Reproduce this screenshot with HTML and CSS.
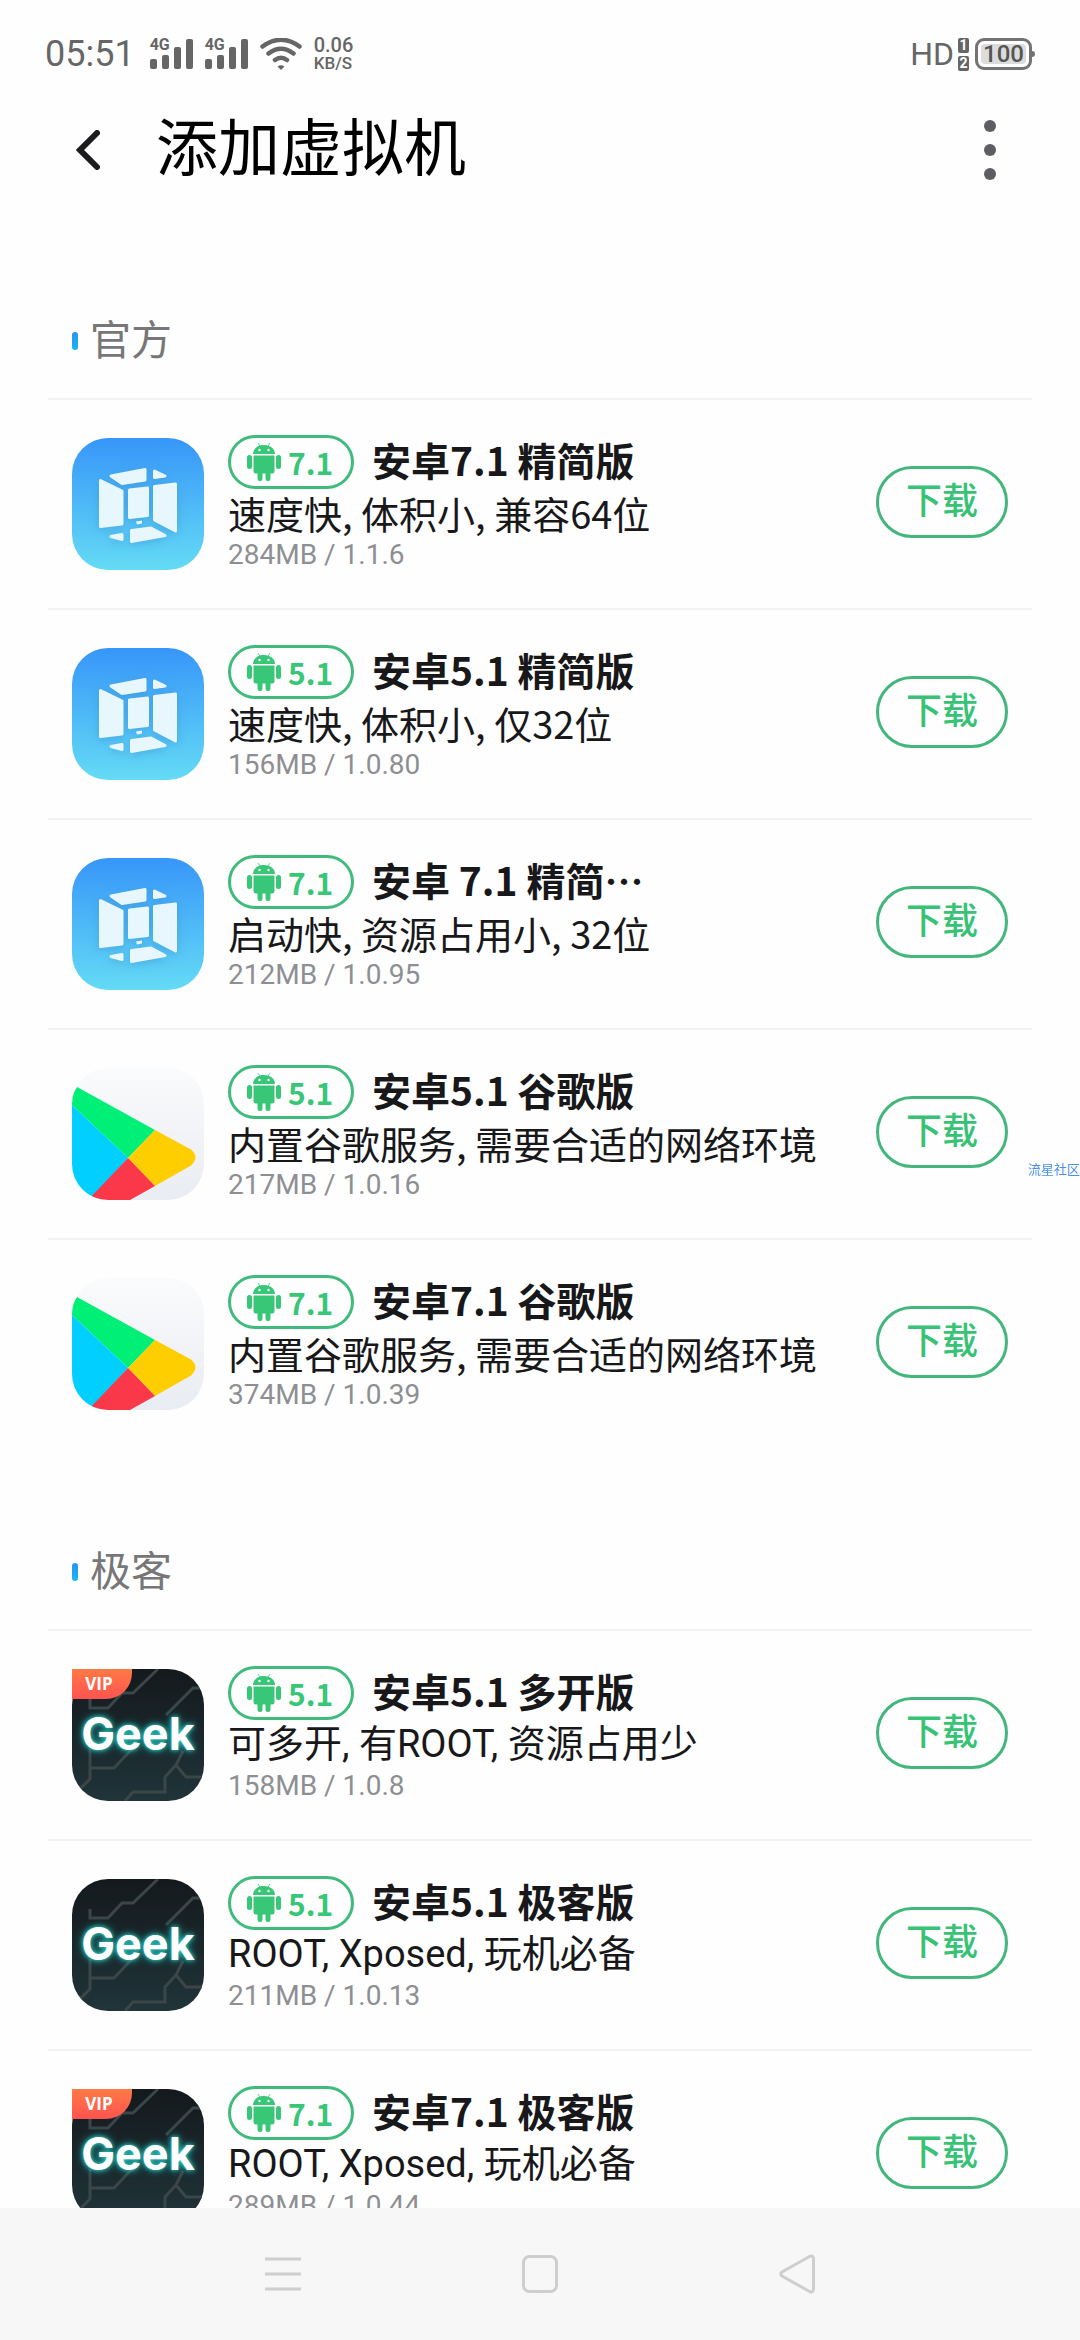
FILE: index.html
```html
<!DOCTYPE html>
<html lang="zh-CN">
<head>
<meta charset="utf-8">
<meta name="viewport" content="width=device-width, initial-scale=1">
<title>添加虚拟机</title>
<link rel="stylesheet" href="styles.css">
</head>
<body>
<svg class="sprite" aria-hidden="true">
  <symbol id="android" viewBox="0 0 34 38">
    <path d="M6 11C6 5.500 11 2 17 2s11 3.500 11 9z"/>
    <path d="M11 0l2.500 4M23 0l-2.500 4" stroke="currentColor" stroke-width="0.800"/>
    <path d="M6.500 12.500h21V28a2.500 2.500 0 0 1-2.500 2.500H9A2.500 2.500 0 0 1 6.500 28z"/>
    <rect x="0" y="12" width="5" height="14" rx="2.500"/><rect x="29" y="12" width="5" height="14" rx="2.500"/>
    <rect x="10.500" y="26" width="5" height="12" rx="2.300"/><rect x="18.500" y="26" width="5" height="12" rx="2.300"/>
    <circle cx="12.500" cy="7" r="1.200" fill="#fff"/><circle cx="21.500" cy="7" r="1.200" fill="#fff"/>
  </symbol>
  <symbol id="cube" viewBox="0 0 132 132">
    <g stroke-width="3" stroke-linejoin="round">
      <path d="M39 38L73 31.500V42L50 45.500z"/><path d="M82.500 33L93 38L82.500 39.500z"/>
      <path d="M28.500 42.500L50 53V86L28.500 88.500z"/><path d="M57.500 52L75.500 50V77.500L57.500 79.500z"/>
      <path d="M82.500 48.500L103.500 46V93L82.500 82z"/><path d="M39 98.500L50 96.500V101.500z"/>
      <path d="M59.500 92.500L79 90L93 97.500L59.500 103.500z"/>
    </g>
    <path d="M64 83.500l6-1v3l-5 1z" stroke="none"/>
  </symbol>
  <symbol id="play" viewBox="0 0 132 132">
    <path fill="#00ef76" d="M5 19L83 62L56 90L0 37V28z"/>
    <path fill="#00cfff" d="M0 37L56 90L18 132H0z"/>
    <path fill="#ffce00" d="M83 62L119 81.500Q128 89 119 97.500L83 118L56 90z"/>
    <path fill="#fa3849" d="M56 90L83 118L58 132H16z"/>
  </symbol>
  <symbol id="circuit" viewBox="0 0 132 132">
    <path fill="none" stroke="#3b4649" stroke-width="3" d="M86 0L61 24H50L36 39H18V30M132 19H121L94 46M18 80V110L6 122M18 99H42L60 80M53 132L61 123H93V108L104 96L114 108H132M104 96L111 82"/>
  </symbol>
  <symbol id="signal" viewBox="0 0 43 30">
    <rect y="20" width="7" height="10" rx="2"/><rect x="12" y="16" width="7" height="14" rx="2"/>
    <rect x="24" y="8" width="7" height="22" rx="2"/><rect x="36" width="7" height="30" rx="2"/>
  </symbol>
</svg>

<header class="statusbar">
  <div class="group">
    <time class="clock">05:51</time>
    <span class="cell"><svg class="bars"><use href="#signal"/></svg><b class="net">4G</b></span>
    <span class="cell"><svg class="bars"><use href="#signal"/></svg><b class="net">4G</b></span>
    <svg class="wifi" viewBox="0 0 42 32"><g fill="none" stroke="#666" stroke-width="4.500" stroke-linecap="round"><path d="M2.500 8.500Q21-5 39.500 8.500M8.500 15.500Q21 6 33.500 15.500M15 22Q21 17.500 27 22"/></g><path fill="#666" d="M17.500 28.500Q21 26 24.500 28.500L21 32z"/></svg>
    <span class="speed"><span class="rate">0.06</span><span class="unit">KB/S</span></span>
  </div>
  <div class="group right">
    <span class="hd">HD</span>
    <span class="sims"><b>1</b><b>2</b></span>
    <span class="battery"><span class="level">100</span></span>
  </div>
</header>

<div class="appbar">
  <button class="icon-btn" type="button" aria-label="返回"><svg class="back" viewBox="0 0 24 40"><path d="M21 3L4 20L21 37" fill="none" stroke="#1c1c1e" stroke-width="6" stroke-linecap="round"/></svg></button>
  <h1>添加虚拟机</h1>
  <button class="icon-btn" type="button" aria-label="更多"><svg class="more" viewBox="0 0 12 60"><g fill="#5d5d62"><circle cx="6" cy="6" r="6"/><circle cx="6" cy="30" r="6"/><circle cx="6" cy="54" r="6"/></g></svg></button>
</div>

<main>
  <section>
    <h2>官方</h2>
    <ul>
      <li>
        <div class="logo vm"><svg><use href="#cube"/></svg></div>
        <div class="info"><div class="head"><span class="tag"><svg><use href="#android"/></svg>7.1</span><h3>安卓7.1 精简版</h3></div><p class="desc">速度快, 体积小, 兼容64位</p><p class="meta">284MB / 1.1.6</p></div>
        <button class="get" type="button">下载</button>
      </li>
      <li>
        <div class="logo vm"><svg><use href="#cube"/></svg></div>
        <div class="info"><div class="head"><span class="tag"><svg><use href="#android"/></svg>5.1</span><h3>安卓5.1 精简版</h3></div><p class="desc">速度快, 体积小, 仅32位</p><p class="meta">156MB / 1.0.80</p></div>
        <button class="get" type="button">下载</button>
      </li>
      <li>
        <div class="logo vm"><svg><use href="#cube"/></svg></div>
        <div class="info"><div class="head"><span class="tag"><svg><use href="#android"/></svg>7.1</span><h3>安卓 7.1 精简…</h3></div><p class="desc">启动快, 资源占用小, 32位</p><p class="meta">212MB / 1.0.95</p></div>
        <button class="get" type="button">下载</button>
      </li>
      <li>
        <div class="logo store"><svg><use href="#play"/></svg></div>
        <div class="info"><div class="head"><span class="tag"><svg><use href="#android"/></svg>5.1</span><h3>安卓5.1 谷歌版</h3></div><p class="desc">内置谷歌服务, 需要合适的网络环境</p><p class="meta">217MB / 1.0.16</p></div>
        <button class="get" type="button">下载</button>
      </li>
      <li>
        <div class="logo store"><svg><use href="#play"/></svg></div>
        <div class="info"><div class="head"><span class="tag"><svg><use href="#android"/></svg>7.1</span><h3>安卓7.1 谷歌版</h3></div><p class="desc">内置谷歌服务, 需要合适的网络环境</p><p class="meta">374MB / 1.0.39</p></div>
        <button class="get" type="button">下载</button>
      </li>
    </ul>
  </section>
  <section>
    <h2>极客</h2>
    <ul>
      <li>
        <div class="logo geek"><svg><use href="#circuit"/></svg><span class="word">Geek</span><span class="vip">VIP</span></div>
        <div class="info"><div class="head"><span class="tag"><svg><use href="#android"/></svg>5.1</span><h3>安卓5.1 多开版</h3></div><p class="desc latin">可多开, 有ROOT, 资源占用少</p><p class="meta">158MB / 1.0.8</p></div>
        <button class="get" type="button">下载</button>
      </li>
      <li>
        <div class="logo geek"><svg><use href="#circuit"/></svg><span class="word">Geek</span></div>
        <div class="info"><div class="head"><span class="tag"><svg><use href="#android"/></svg>5.1</span><h3>安卓5.1 极客版</h3></div><p class="desc latin">ROOT, Xposed, 玩机必备</p><p class="meta">211MB / 1.0.13</p></div>
        <button class="get" type="button">下载</button>
      </li>
      <li>
        <div class="logo geek"><svg><use href="#circuit"/></svg><span class="word">Geek</span><span class="vip">VIP</span></div>
        <div class="info"><div class="head"><span class="tag"><svg><use href="#android"/></svg>7.1</span><h3>安卓7.1 极客版</h3></div><p class="desc latin">ROOT, Xposed, 玩机必备</p><p class="meta">289MB / 1.0.44</p></div>
        <button class="get" type="button">下载</button>
      </li>
    </ul>
  </section>
</main>

<nav class="navbar" aria-label="系统导航">
  <button type="button" aria-label="菜单"><svg viewBox="0 0 36 40"><path d="M0 5h36M0 20h36M0 35h36"/></svg></button>
  <button type="button" aria-label="主页"><svg viewBox="0 0 36 40"><rect x="1.500" y="2.500" width="33" height="35" rx="6"/></svg></button>
  <button type="button" aria-label="返回"><svg viewBox="0 0 36 40"><path d="M30.500 2.500L3 18Q0.500 20 3 22L30.500 37.500Q34.500 39 34.500 35V5Q34.500 1 30.500 2.500z"/></svg></button>
</nav>
<span class="watermark">流星社区</span>
</body>
</html>
```
FILE: styles.css
```css
* { box-sizing: border-box; }
body {
  margin: 0;
  height: 100vh;
  display: flex;
  flex-direction: column;
  background: #fefefe;
  color: #18181a;
  font-family: Roboto, "Noto Sans CJK SC", sans-serif;
  overflow: hidden;
}
h1, h2, h3, p, ul { margin: 0; padding: 0; }
ul { list-style: none; }
button { padding: 0; border: 0; background: none; font: inherit; color: inherit; }
svg { display: block; }
.sprite { position: absolute; width: 0; height: 0; }

.statusbar {
  flex: none;
  display: flex;
  justify-content: space-between;
  height: 110px;
  padding: 0 48px 0 45px;
  color: #666;
}
.group { display: flex; align-items: center; gap: 12px; height: 108px; }
.clock { font-size: 36px; margin-right: 3px; }
.cell { position: relative; }
.bars { width: 43px; height: 30px; fill: #666; }
.net { position: absolute; left: 0; top: 0; font-size: 16px; line-height: 12px; }
.wifi { width: 42px; height: 32px; }
.speed { display: flex; flex-direction: column; font-weight: 500; }
.rate { font-size: 20px; line-height: 18px; }
.unit { font-size: 17px; line-height: 18px; }
.right { gap: 4px; }
.hd { font-size: 32px; }
.sims { display: flex; flex-direction: column; gap: 3px; }
.sims b { width: 11px; height: 15px; border-radius: 2px; background: #666; color: #fff; font-size: 14px; line-height: 15px; text-align: center; }
.battery { position: relative; width: 57px; height: 32px; padding: 3px; border: 3px solid #737373; border-radius: 9px; margin-left: 2px; }
.battery::after { content: ""; position: absolute; right: -6px; top: 10px; width: 3px; height: 6px; border-radius: 0 3px 3px 0; background: #737373; }
.level { display: block; height: 20px; border-radius: 4px; background: #dcdcdc; font-size: 24px; font-weight: 500; line-height: 20px; text-align: center; color: #555; }

.appbar { flex: none; display: flex; align-items: center; height: 80px; padding: 0 74px 0 72px; }
.icon-btn { display: flex; justify-content: center; width: 32px; height: 80px; align-items: center; }
.back { width: 24px; height: 40px; }
.more { width: 12px; height: 60px; }
.appbar h1 { flex: 1; padding: 0 52px; font-size: 62px; font-weight: 400; line-height: 80px; color: #000; }

main { flex: 1; min-height: 0; overflow: hidden; padding: 27px 48px 0; }
h2 {
  display: flex;
  align-items: center;
  gap: 12px;
  padding: 94px 24px 27px;
  font-size: 41px;
  font-weight: 400;
  line-height: 60px;
  color: #777;
}
h2::before { content: ""; width: 6px; height: 18px; border-radius: 3px; background: linear-gradient(#2e90f5, #12b8f5); }
li { display: flex; align-items: center; gap: 24px; height: 210px; padding: 0 24px; border-top: 2px solid #f1f2f3; }

.logo { position: relative; flex: none; width: 132px; height: 132px; border-radius: 36px; }
.logo svg { width: 132px; height: 132px; border-radius: 36px; }
.vm { background: linear-gradient(#3796f9, #64dbf5); }
.vm svg { fill: #e8f6fe; stroke: #e8f6fe; filter: drop-shadow(0 2px 4px #3a8fd080); }
.store { background: linear-gradient(#fafbfc, #e9ecf2); }
.geek { background: linear-gradient(#14191c, #20343a); }
.word { position: absolute; inset: 0; font: 700 45px/130px Inter, sans-serif; text-align: center; color: #fff; text-shadow: 0 0 4px #2fd5cc, 0 0 8px #1cb5ae; }
.vip { position: absolute; left: 0; top: 0; width: 60px; height: 30px; padding-right: 6px; border-radius: 0 0 26px 0; background: linear-gradient(#ff7a45, #ff5350); font: 700 17px/30px "Open Sans", sans-serif; text-align: center; color: #fff; }

.info { flex: 1; min-width: 0; white-space: nowrap; }
.head { display: flex; gap: 18px; height: 54px; }
.tag {
  display: flex;
  align-items: center;
  gap: 7px;
  width: 126px;
  height: 54px;
  padding: 0 16px;
  border: 3px solid #3fbb7b;
  border-radius: 27px;
  color: #38c677;
  font-family: "Noto Sans CJK SC", sans-serif;
  font-size: 30px;
  font-weight: 700;
}
.tag svg { width: 34px; height: 38px; fill: #38c677; }
h3 { font: 700 39px/48px "Noto Sans CJK SC", sans-serif; }
.desc { font-family: "Noto Sans CJK SC", sans-serif; font-size: 38px; line-height: 48px; }
.desc.latin { font-family: Roboto, "Noto Sans CJK SC", sans-serif; }
.meta { font-size: 28px; line-height: 36px; color: #8e8f93; }
.get { flex: none; width: 132px; height: 72px; margin-bottom: 4px; border: 3px solid #43b77b; border-radius: 36px; color: #38c276; font-size: 36px; font-weight: 500; line-height: 66px; }

.navbar { flex: none; display: flex; height: 132px; padding: 0 154px; background: #f7f7f7; }
.navbar button { flex: 1; display: flex; align-items: center; justify-content: center; }
.navbar svg { width: 36px; height: 40px; fill: none; stroke: #cecece; stroke-width: 3; }
.watermark { position: fixed; right: 0; top: 1160px; font-size: 13px; line-height: 20px; color: #4a90e8; }
```
